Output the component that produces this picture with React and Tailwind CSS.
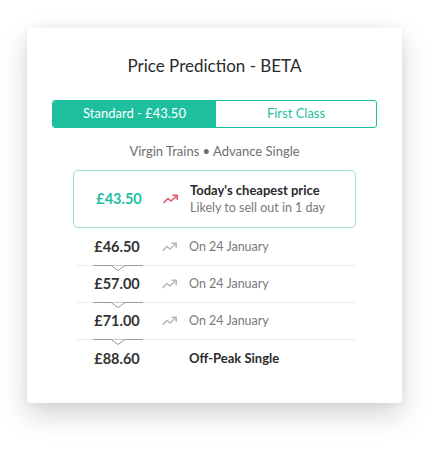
import React from "react";

function Trend({ color }) {
  return (
    <svg width="16" height="10" viewBox="0 0 16 10" fill="none" stroke={color} strokeWidth="1.6" strokeLinecap="round" strokeLinejoin="round">
      <path d="M1 8.5 L5 4.5 L8 7 L14 1.5" />
      <path d="M10 1.3 L14.2 1.3 L14.2 5.2" />
    </svg>
  );
}

function Divider() {
  return (
    <div className="relative h-px bg-[#ececec] ml-[3px] mr-0">
      <div className="absolute left-[17px] top-0 w-[50px] h-px bg-[#9a9a9a]" />
      <svg className="absolute left-[35px] top-0" width="14" height="6" viewBox="0 0 14 6" fill="none">
        <path d="M0 0.5 L7 5.5 L14 0.5" stroke="#9a9a9a" strokeWidth="1" fill="white" />
      </svg>
    </div>
  );
}

const rows = [
  { price: "£46.50", label: "On 24 January" },
  { price: "£57.00", label: "On 24 January" },
  { price: "£71.00", label: "On 24 January" },
];

export default function App() {
  return (
    <div className="w-[437px] h-[450px] bg-white pt-[28px] pl-[27px]" style={{ fontFamily: "Lato, 'Noto Sans', sans-serif" }}>
      <div className="w-[375px] h-[375px] bg-white rounded-[4px] shadow-[0_12px_28px_rgba(0,0,0,0.17),0_0_8px_rgba(0,0,0,0.06)] pt-[28px] px-[25px]">
        <h1 className="text-center text-[17px] text-[#2b2b2b] leading-[20px]">Price Prediction - BETA</h1>

        {/* Tabs */}
        <div className="mt-[24px] flex h-[28px] rounded-[3px] border border-[#1dbf9f] overflow-hidden text-[13px]">
          <div className="w-[163px] bg-[#1dbf9f] text-white flex items-center justify-center">Standard - £43.50</div>
          <div className="flex-1 text-[#1dbf9f] flex items-center justify-center">First Class</div>
        </div>

        <p className="mt-[15px] text-center text-[13px] text-[#6f6f6f] leading-[16px]">Virgin Trains • Advance Single</p>

        {/* Cheapest */}
        <div className="mt-[11px] mx-[21px] h-[58px] rounded-[5px] border border-[#9fe0d2] flex items-center">
          <div className="w-[88px] pl-[2px] text-center text-[14.5px] font-bold text-[#1dbf9f]">£43.50</div>
          <div className="w-[28px] flex justify-start pl-[1px]">
            <Trend color="#e2566c" />
          </div>
          <div className="leading-[18px]">
            <div className="text-[13px] font-bold text-[#2b2b2b]">Today's cheapest price</div>
            <div className="text-[12.5px] text-[#7a7a7a]">Likely to sell out in 1 day</div>
          </div>
        </div>

        {/* Rows */}
        <div className="mx-[21px] mt-[1px]">
          {rows.map((r) => (
            <div key={r.price}>
              <div className="h-[36px] flex items-center">
                <div className="w-[88px] text-center text-[14.5px] font-bold text-[#333]">{r.price}</div>
                <div className="w-[28px] pl-[1px]">
                  <Trend color="#b8b8b8" />
                </div>
                <div className="text-[12.5px] text-[#7a7a7a]">{r.label}</div>
              </div>
              <Divider />
            </div>
          ))}
          <div className="h-[38px] flex items-center">
            <div className="w-[88px] text-center text-[14.5px] font-bold text-[#333]">£88.60</div>
            <div className="w-[28px]" />
            <div className="text-[13px] font-bold text-[#2b2b2b]">Off-Peak Single</div>
          </div>
        </div>
      </div>
    </div>
  );
}
